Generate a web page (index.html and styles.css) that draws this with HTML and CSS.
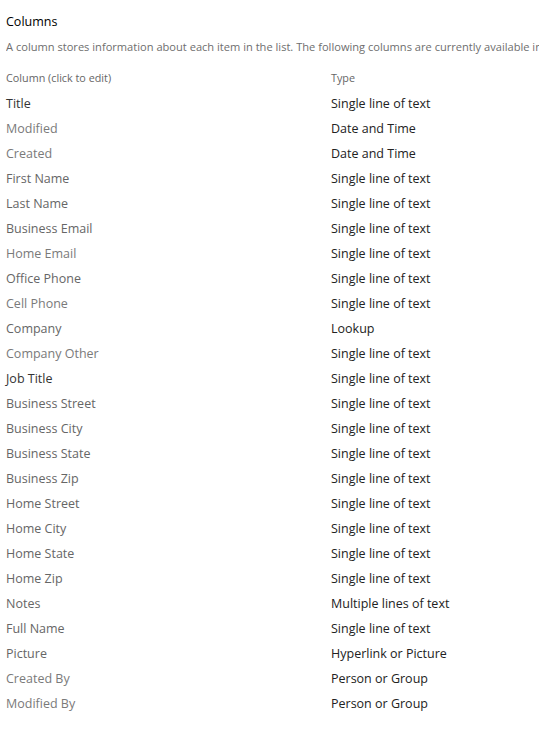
FILE: index.html
```html
<!DOCTYPE html>
<html>
<head>
<meta charset="utf-8">
<link rel="stylesheet" href="styles.css">
</head>
<body>
<div class="page">
  <h2 class="title">Columns</h2>
  <p class="desc">A column stores information about each item in the list. The following columns are currently available in this list:</p>
  <table class="cols">
    <thead>
      <tr><th class="c1">Column (click to edit)</th><th>Type</th></tr>
    </thead>
    <tbody>
      <tr><td class="c1 d1">Title</td><td>Single line of text</td></tr>
      <tr><td class="c1 d3">Modified</td><td>Date and Time</td></tr>
      <tr><td class="c1 d3">Created</td><td>Date and Time</td></tr>
      <tr><td class="c1 d2">First Name</td><td>Single line of text</td></tr>
      <tr><td class="c1 d2">Last Name</td><td>Single line of text</td></tr>
      <tr><td class="c1 d2">Business Email</td><td>Single line of text</td></tr>
      <tr><td class="c1 d3">Home Email</td><td>Single line of text</td></tr>
      <tr><td class="c1 d2">Office Phone</td><td>Single line of text</td></tr>
      <tr><td class="c1 d3">Cell Phone</td><td>Single line of text</td></tr>
      <tr><td class="c1 d2">Company</td><td>Lookup</td></tr>
      <tr><td class="c1 d3">Company Other</td><td>Single line of text</td></tr>
      <tr><td class="c1 d1">Job Title</td><td>Single line of text</td></tr>
      <tr><td class="c1 d2">Business Street</td><td>Single line of text</td></tr>
      <tr><td class="c1 d2">Business City</td><td>Single line of text</td></tr>
      <tr><td class="c1 d2">Business State</td><td>Single line of text</td></tr>
      <tr><td class="c1 d2">Business Zip</td><td>Single line of text</td></tr>
      <tr><td class="c1 d2">Home Street</td><td>Single line of text</td></tr>
      <tr><td class="c1 d2">Home City</td><td>Single line of text</td></tr>
      <tr><td class="c1 d2">Home State</td><td>Single line of text</td></tr>
      <tr><td class="c1 d2">Home Zip</td><td>Single line of text</td></tr>
      <tr><td class="c1 d2">Notes</td><td>Multiple lines of text</td></tr>
      <tr><td class="c1 d2">Full Name</td><td>Single line of text</td></tr>
      <tr><td class="c1 d2">Picture</td><td>Hyperlink or Picture</td></tr>
      <tr><td class="c1 d3">Created By</td><td>Person or Group</td></tr>
      <tr><td class="c1 d3">Modified By</td><td>Person or Group</td></tr>
    </tbody>
  </table>
</div>
</body>
</html>
```
FILE: styles.css
```css
html, body {
  margin: 0;
  padding: 0;
  background: #ffffff;
}
body {
  font-family: "Open Sans", "Noto Sans", sans-serif;
  overflow: hidden;
}
.page {
  padding: 12px 0 0 6px;
  width: 533px;
  overflow: hidden;
}
.title {
  margin: 0;
  font-size: 12.5px;
  font-weight: 400;
  color: #000;
  line-height: 20px;
}
.desc {
  margin: 5px 0 0 0;
  font-size: 11.1px;
  color: #6e6e6e;
  line-height: 20px;
  white-space: nowrap;
  overflow: hidden;
}
.cols {
  border-collapse: collapse;
  margin-top: 10px;
}
.cols th {
  text-align: left;
  font-weight: 400;
  font-size: 10.8px;
  color: #666;
  padding: 0 0 4px 0;
  height: 20px;
  vertical-align: middle;
}
.cols td {
  padding: 0;
  height: 25px;
  font-size: 12.5px;
  color: #222;
  vertical-align: middle;
}
.cols .c1 {
  width: 325px;
}
.cols .d1 { color: #333; }
.cols .d2 { color: #666; }
.cols .d3 { color: #7a7a7a; }
```
